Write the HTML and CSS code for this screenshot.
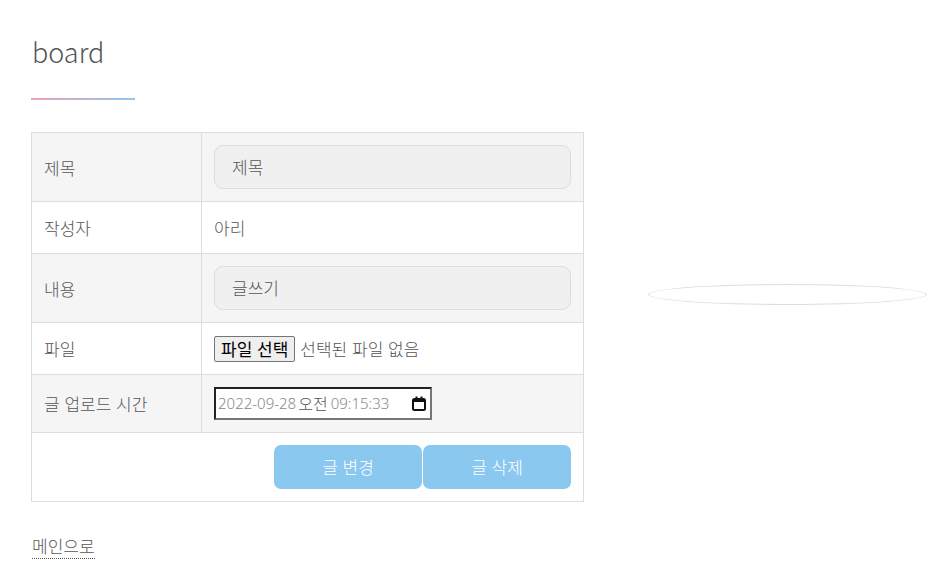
FILE: index.html
```html
<!DOCTYPE html>
<html lang="ko">
<head>
<meta charset="utf-8">
<title>board</title>
<link rel="stylesheet" href="styles.css">
</head>
<body>
<div class="page">
  <main class="content">
    <h1 class="title">board</h1>
    <div class="title-line"></div>
    <table class="board">
      <tr class="shade">
        <th>제목</th>
        <td><div class="field">제목</div></td>
      </tr>
      <tr>
        <th>작성자</th>
        <td class="text">아리</td>
      </tr>
      <tr class="shade">
        <th>내용</th>
        <td><div class="field">글쓰기</div></td>
      </tr>
      <tr>
        <th>파일</th>
        <td><div class="file-row"><span class="file-btn">파일 선택</span><span class="file-none">선택된 파일 없음</span></div></td>
      </tr>
      <tr class="shade">
        <th>글 업로드 시간</th>
        <td>
          <div class="date-box">
            <span class="date-num">2022-09-28</span>
            <span class="date-ampm">오전</span>
            <span class="date-num">09:15:33</span>
            <svg class="cal" width="14" height="15" viewBox="0 0 14 15"><rect x="1" y="3" width="12" height="11" rx="1.5" fill="none" stroke="#111" stroke-width="2"/><rect x="1" y="3" width="12" height="3" fill="#111"/><rect x="3.5" y="0.5" width="2" height="3" fill="#111"/><rect x="8.5" y="0.5" width="2" height="3" fill="#111"/></svg>
          </div>
        </td>
      </tr>
      <tr>
        <td colspan="2" class="actions">
          <div class="btns">
            <span class="btn">글 변경</span>
            <span class="btn">글 삭제</span>
          </div>
        </td>
      </tr>
    </table>
    <a class="home" href="#">메인으로</a>
  </main>
  <div class="oval"></div>
</div>
</body>
</html>
```

FILE: styles.css
```css
* { box-sizing: border-box; }
html, body { margin: 0; padding: 0; background: #fff; }
body {
  font-family: "Noto Sans CJK KR", "Noto Sans", sans-serif;
  font-weight: 300;
  color: #555;
  font-size: 17px;
}
.page {
  display: flex;
  align-items: flex-start;
}
.content {
  padding: 31px 0 0 31px;
  width: 584px;
}
.title {
  margin: 0 0 0 1px;
  font-size: 27px;
  font-weight: 300;
  line-height: 42px;
  color: #555;
  height: 42px;
}
.title-line {
  margin-top: 25px;
  width: 104px;
  height: 2px;
  background: linear-gradient(to right, #eba3b6, #8cc8f0);
}
.board {
  margin-top: 32px;
  width: 553px;
  border-collapse: collapse;
  border: 1px solid #ddd;
}
.board th, .board td {
  border: 1px solid #ddd;
  padding: 12px;
  text-align: left;
  vertical-align: middle;
  font-weight: 300;
  line-height: 27px;
}
.board th { width: 170px; }
.board tr.shade { background: #f5f5f5; }
.field {
  height: 44px;
  border: 1px solid #ddd;
  border-radius: 9px;
  background: #f0f0f0;
  padding: 0 17px;
  line-height: 42px;
  color: #555;
}
.file-row {
  display: flex;
  align-items: center;
  height: 27px;
}
.file-btn {
  display: block;
  height: 26px;
  line-height: 24px;
  padding: 0 6px;
  border: 1px solid #767676;
  border-radius: 2px;
  background: #efefef;
  color: #000;
  font-weight: 400;
  margin-right: 5px;
}
.date-box {
  display: flex;
  align-items: center;
  width: 218px;
  height: 33px;
  border: 2px solid #767676;
  border-color: #222 #767676 #767676 #222;
  background: #fff;
  padding: 0 2px;
  font-size: 15px;
}
.date-num { color: #888; font-family: "Noto Sans", sans-serif; font-weight: 300; }
.date-ampm { color: #555; font-size: 16px; margin: 0 3px 0 2px; }
.cal { margin-left: auto; margin-right: 2px; }
.btns {
  display: flex;
  justify-content: flex-end;
  gap: 1px;
}
.btn {
  display: block;
  width: 148px;
  height: 44px;
  line-height: 44px;
  text-align: center;
  background: #8bc8f0;
  color: #fff;
  border-radius: 7px;
}
.home {
  display: inline-block;
  margin-top: 32px;
  margin-left: 1px;
  color: #555;
  text-decoration: none;
  border-bottom: 1px dotted #555;
  line-height: 24px;
}
.oval {
  margin: 284px 0 0 64px;
  width: 279px;
  height: 21px;
  border: 1px solid #ddd;
  border-radius: 50%;
}
```
